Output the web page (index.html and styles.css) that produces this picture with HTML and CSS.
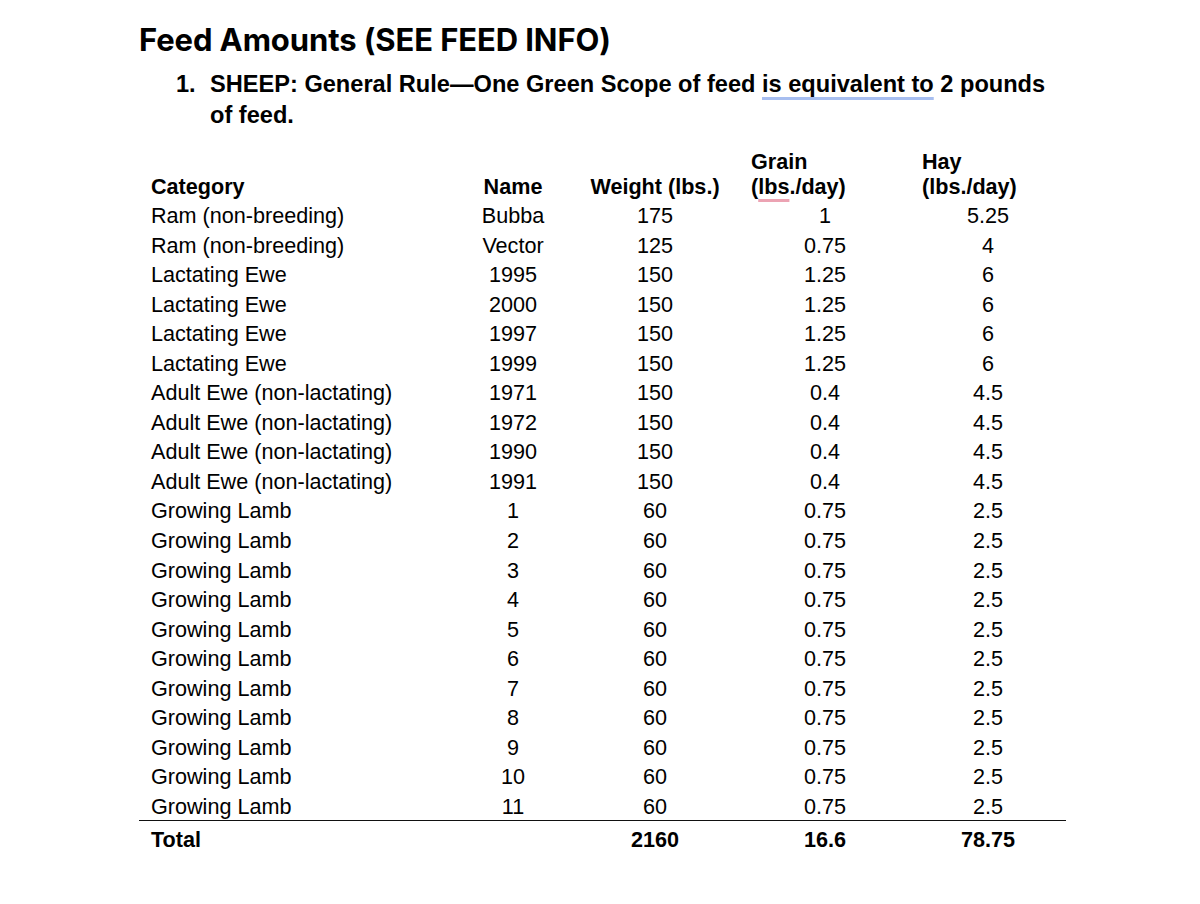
FILE: index.html
```html
<!DOCTYPE html>
<html>
<head>
<meta charset="utf-8">
<link rel="stylesheet" href="styles.css">
</head>
<body>
<div class="page">
  <h1 class="title">Feed Amounts (SEE FEED INFO)</h1>
  <ol class="rules">
    <li><span class="num">1.</span><span class="rule-text">SHEEP: General Rule—One Green Scope of feed <span class="grammar">is equivalent to</span> 2 pounds of feed.</span></li>
  </ol>
  <table class="feed">
    <colgroup>
      <col class="c-cat"><col class="c-name"><col class="c-weight"><col class="c-grain"><col class="c-hay">
    </colgroup>
    <thead>
      <tr>
        <th class="cat">Category</th>
        <th>Name</th>
        <th>Weight (lbs.)</th>
        <th class="h-grain">Grain<br>(<span class="spell">lbs</span>./day)</th>
        <th class="h-hay">Hay<br>(lbs./day)</th>
      </tr>
    </thead>
    <tbody>
      <tr><td class="cat">Ram (non-breeding)</td><td>Bubba</td><td>175</td><td class="grain">1</td><td class="hay">5.25</td></tr>
      <tr><td class="cat">Ram (non-breeding)</td><td>Vector</td><td>125</td><td class="grain">0.75</td><td class="hay">4</td></tr>
      <tr><td class="cat">Lactating Ewe</td><td>1995</td><td>150</td><td class="grain">1.25</td><td class="hay">6</td></tr>
      <tr><td class="cat">Lactating Ewe</td><td>2000</td><td>150</td><td class="grain">1.25</td><td class="hay">6</td></tr>
      <tr><td class="cat">Lactating Ewe</td><td>1997</td><td>150</td><td class="grain">1.25</td><td class="hay">6</td></tr>
      <tr><td class="cat">Lactating Ewe</td><td>1999</td><td>150</td><td class="grain">1.25</td><td class="hay">6</td></tr>
      <tr><td class="cat">Adult Ewe (non-lactating)</td><td>1971</td><td>150</td><td class="grain">0.4</td><td class="hay">4.5</td></tr>
      <tr><td class="cat">Adult Ewe (non-lactating)</td><td>1972</td><td>150</td><td class="grain">0.4</td><td class="hay">4.5</td></tr>
      <tr><td class="cat">Adult Ewe (non-lactating)</td><td>1990</td><td>150</td><td class="grain">0.4</td><td class="hay">4.5</td></tr>
      <tr><td class="cat">Adult Ewe (non-lactating)</td><td>1991</td><td>150</td><td class="grain">0.4</td><td class="hay">4.5</td></tr>
      <tr><td class="cat">Growing Lamb</td><td>1</td><td>60</td><td class="grain">0.75</td><td class="hay">2.5</td></tr>
      <tr><td class="cat">Growing Lamb</td><td>2</td><td>60</td><td class="grain">0.75</td><td class="hay">2.5</td></tr>
      <tr><td class="cat">Growing Lamb</td><td>3</td><td>60</td><td class="grain">0.75</td><td class="hay">2.5</td></tr>
      <tr><td class="cat">Growing Lamb</td><td>4</td><td>60</td><td class="grain">0.75</td><td class="hay">2.5</td></tr>
      <tr><td class="cat">Growing Lamb</td><td>5</td><td>60</td><td class="grain">0.75</td><td class="hay">2.5</td></tr>
      <tr><td class="cat">Growing Lamb</td><td>6</td><td>60</td><td class="grain">0.75</td><td class="hay">2.5</td></tr>
      <tr><td class="cat">Growing Lamb</td><td>7</td><td>60</td><td class="grain">0.75</td><td class="hay">2.5</td></tr>
      <tr><td class="cat">Growing Lamb</td><td>8</td><td>60</td><td class="grain">0.75</td><td class="hay">2.5</td></tr>
      <tr><td class="cat">Growing Lamb</td><td>9</td><td>60</td><td class="grain">0.75</td><td class="hay">2.5</td></tr>
      <tr><td class="cat">Growing Lamb</td><td>10</td><td>60</td><td class="grain">0.75</td><td class="hay">2.5</td></tr>
      <tr class="last"><td class="cat">Growing Lamb</td><td>11</td><td>60</td><td class="grain">0.75</td><td class="hay">2.5</td></tr>
    </tbody>
    <tfoot>
      <tr><td class="cat">Total</td><td></td><td>2160</td><td class="grain">16.6</td><td class="hay">78.75</td></tr>
    </tfoot>
  </table>
</div>
</body>
</html>
```
FILE: styles.css
```css
html, body {
  margin: 0;
  padding: 0;
  background: #fff;
}
body {
  font-family: "Liberation Sans", Arial, sans-serif;
  color: #000;
}
.page {
  width: 927px;
  padding: 22px 0 0 139px;
}
.title {
  margin: 0;
  font-family: Inter, "Open Sans", sans-serif;
  font-weight: 700;
  font-size: 31px;
  line-height: 36px;
  letter-spacing: -0.1px;
}
.rules {
  list-style: none;
  margin: 11px 0 0 0;
  padding: 0;
  font-size: 23.6px;
  font-weight: 700;
  line-height: 31px;
}
.rules li {
  display: flex;
}
.rules .num {
  width: 34px;
  margin-left: 37px;
  flex: none;
}
.rule-text {
  width: 845px;
}
.grammar {
  text-decoration: underline;
  text-decoration-color: #a7bef0;
  text-decoration-thickness: 3px;
  text-underline-offset: 5px;
}
.spell {
  text-decoration: underline;
  text-decoration-color: #eca3b3;
  text-decoration-thickness: 3px;
  text-underline-offset: 5px;
}
.feed {
  margin-top: 18px;
  width: 927px;
  table-layout: fixed;
  border-collapse: collapse;
  font-size: 21.6px;
}
.c-cat { width: 301px; }
.c-name { width: 146px; }
.c-weight { width: 138px; }
.c-grain { width: 198px; }
.c-hay { width: 144px; }
.feed th {
  font-weight: 700;
  line-height: 25px;
  vertical-align: bottom;
  text-align: center;
  padding: 0 0 2px 0;
  white-space: nowrap;
}
.feed td {
  line-height: 29.55px;
  padding: 0;
  text-align: center;
  white-space: nowrap;
}
.feed .cat {
  text-align: left;
  padding-left: 12px;
}
.feed td.grain {
  padding-left: 4px;
}
.feed td.hay {
  padding-left: 4px;
  padding-right: 16px;
}
.feed th.h-grain {
  text-align: left;
  padding-left: 27px;
}
.feed th.h-hay {
  text-align: left;
}
.feed tr.last td {
  line-height: 27px;
  vertical-align: top;
  padding-top: 1px;
}
.feed tfoot td {
  border-top: 1.5px solid #111;
  font-weight: 700;
  padding-top: 4px;
  line-height: 29px;
}
```
